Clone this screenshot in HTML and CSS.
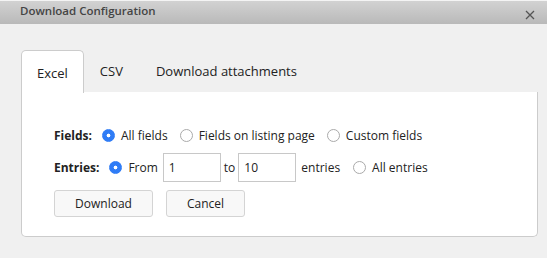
FILE: index.html
```html
<!DOCTYPE html>
<html lang="en">
<head>
  <meta charset="UTF-8" />
  <title>Download Configuration</title>
  <link rel="stylesheet" href="styles.css">
</head>
<body>
  <div class="dialog">
    <div class="titlebar">
      <span class="title">Download Configuration</span>
      <svg class="close" width="10" height="10" viewBox="0 0 10 10">
        <path d="M1 1L9 9M9 1L1 9" stroke="#555" stroke-width="1.3" fill="none"/>
      </svg>
    </div>

    <div class="content">
      <ul class="tabs">
        <li class="tab active">Excel</li>
        <li class="tab">CSV</li>
        <li class="tab">Download attachments</li>
      </ul>

      <div class="panel">
        <div class="row">
          <span class="label">Fields:</span>
          <label class="opt"><span class="radio on"></span>All fields</label>
          <label class="opt"><span class="radio"></span>Fields on listing page</label>
          <label class="opt"><span class="radio"></span>Custom fields</label>
        </div>

        <div class="row entries">
          <span class="label">Entries:</span>
          <label class="opt"><span class="radio on"></span>From</label>
          <input type="text" value="1" />
          <span class="word">to</span>
          <input type="text" value="10" />
          <span class="word last">entries</span>
          <label class="opt"><span class="radio"></span>All entries</label>
        </div>

        <div class="buttons">
          <button class="btn dl">Download</button>
          <button class="btn cancel">Cancel</button>
        </div>
      </div>
    </div>
  </div>
</body>
</html>
```

FILE: styles.css
```css
body {
  margin: 0;
  background: #f0f0f0;
  font-family: 'Open Sans', 'Noto Sans', sans-serif;
  font-size: 13px;
  color: #222;
}

.dialog {
  width: 547px;
  height: 258px;
  background: #f0f0f0;
}

/* Title bar */
.titlebar {
  height: 24px;
  box-sizing: border-box;
  border-top: 1px solid #f4f4f4;
  background: linear-gradient(#d2d2d2, #b9b9b9);
  display: flex;
  align-items: center;
  justify-content: space-between;
  padding: 0 12px 0 20px;
}

.title {
  font-weight: 600;
  font-size: 11.5px;
  color: #444;
  margin-top: -5px;
}

.close {
  margin-top: 5px;
}

.content {
  padding: 26px 10px 0 21px;
}

/* Tabs */
.tabs {
  list-style: none;
  margin: 0;
  padding: 0;
  display: flex;
  height: 42px;
}

.tab {
  padding: 0 16px;
  line-height: 42px;
  color: #222;
}

.tab:nth-child(2) {
  padding-right: 17px;
}

.tab.active {
  background: #fff;
  border: 1px solid #ccc;
  border-bottom: none;
  border-radius: 5px 5px 0 0;
  padding: 3px 15px 0;
  line-height: 38px;
  margin-bottom: -1px;
}

/* Panel */
.panel {
  background: #fff;
  border: 1px solid #ccc;
  border-top: none;
  border-radius: 0 0 5px 5px;
  width: 517px;
  height: 145px;
  box-sizing: border-box;
  padding: 30px 0 0 32px;
  font-size: 12px;
}

.row {
  display: flex;
  align-items: center;
  height: 26px;
}

.row.entries {
  margin-top: 5px;
  height: 29px;
}

.label {
  font-weight: 700;
  margin-right: 10px;
}

.entries .label {
  margin-right: 10px;
}

.opt {
  display: flex;
  align-items: center;
  margin-right: 12px;
}

.radio {
  width: 11px;
  height: 11px;
  border: 1px solid #aaa;
  border-radius: 50%;
  background: #fff;
  margin-right: 6px;
  box-sizing: content-box;
}

.radio.on {
  border-color: #2f7cf6;
  background: radial-gradient(circle, #fff 0 1.6px, #2f7cf6 2.2px);
}

.entries .opt {
  margin-right: 5px;
}

input {
  width: 58px;
  height: 29px;
  box-sizing: border-box;
  border: 1px solid #c8c8c8;
  padding: 0 5px;
  font-family: inherit;
  font-size: 12px;
  color: #222;
}

.word {
  margin: 0 3px 0 3px;
}

.word.last {
  margin: 0 13px 0 5px;
}

.buttons {
  display: flex;
  gap: 13px;
  margin-top: 8px;
}

.btn {
  height: 27px;
  background: #f8f8f8;
  border: 1px solid #d4d4d4;
  border-radius: 3px;
  font-family: inherit;
  font-size: 12px;
  color: #222;
}

.btn.dl {
  width: 99px;
}

.btn.cancel {
  width: 79px;
}
```
